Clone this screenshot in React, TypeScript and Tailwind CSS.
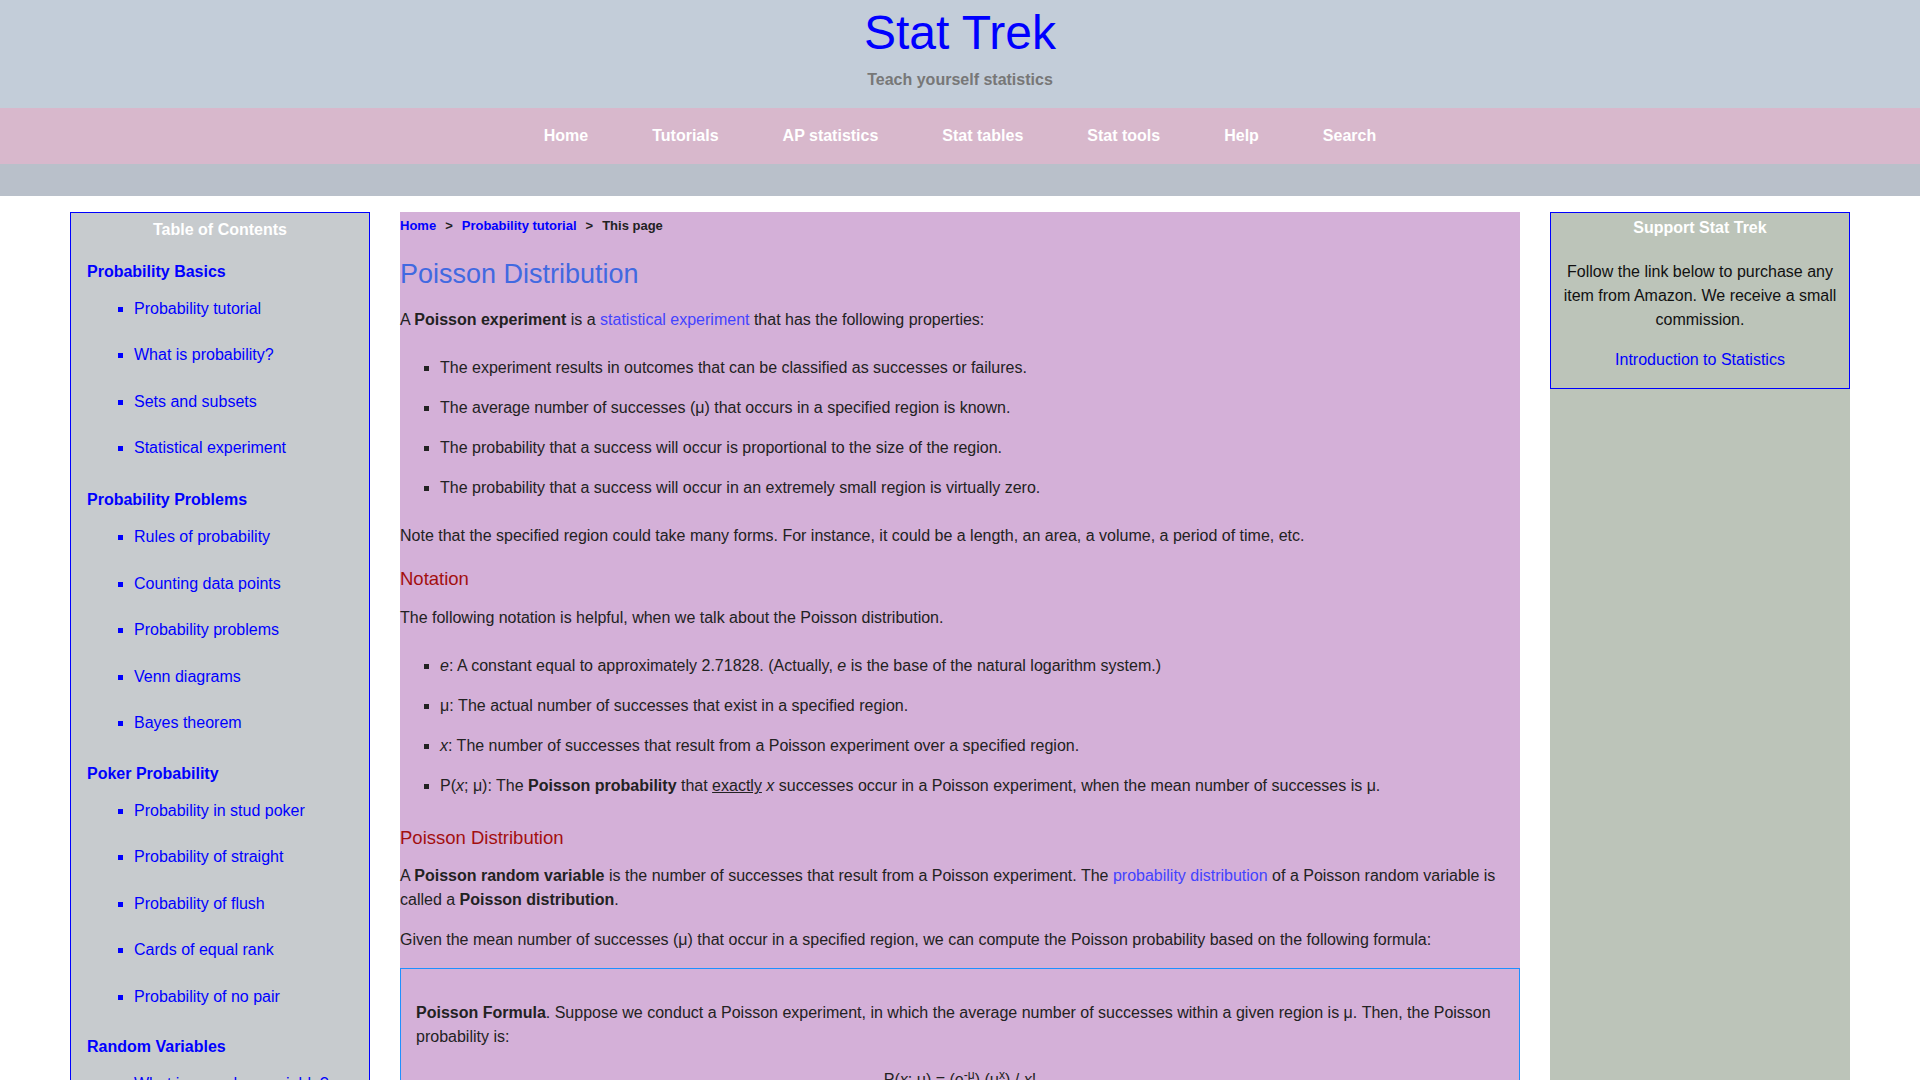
import React from "react";

const navItems = ["Home", "Tutorials", "AP statistics", "Stat tables", "Stat tools", "Help", "Search"];

const toc: { title: string; items: string[] }[] = [
  {
    title: "Probability Basics",
    items: ["Probability tutorial", "What is probability?", "Sets and subsets", "Statistical experiment"],
  },
  {
    title: "Probability Problems",
    items: ["Rules of probability", "Counting data points", "Probability problems", "Venn diagrams", "Bayes theorem"],
  },
  {
    title: "Poker Probability",
    items: [
      "Probability in stud poker",
      "Probability of straight",
      "Probability of flush",
      "Cards of equal rank",
      "Probability of no pair",
    ],
  },
  {
    title: "Random Variables",
    items: ["What is a random variable?", "Discrete vs. continuous", "Probability distributions", "Mean and variance"],
  },
];

export default function App() {
  return (
    <div className="min-h-screen bg-white font-['Liberation_Sans',Arial,sans-serif] text-[16px]">
      {/* Header */}
      <div className="h-[108px] bg-[#c3cdd9] text-center">
        <div className="pt-[5px] text-[48px] leading-[55px] text-[#0000ff]">Stat Trek</div>
        <div className="mt-[11px] text-[16px] font-bold leading-[18px] text-[#777777]">
          Teach yourself statistics
        </div>
      </div>
      {/* Nav */}
      <div className="flex h-[56px] items-center justify-center bg-[#d8b8cc]">
        {navItems.map((n) => (
          <span key={n} className="px-8 text-[16px] font-bold leading-[18px] text-white">
            {n}
          </span>
        ))}
      </div>
      <div className="h-[32px] bg-[#b9c0ca]" />

      {/* Body */}
      <div className="flex items-stretch gap-[30px] px-[70px] pt-[16px]">
        {/* Left TOC */}
        <div className="w-[300px] shrink-0 border border-[#0000ff] bg-[#c7cbce] pt-[8px] pb-[20px]">
          <div className="text-center font-bold leading-[18px] text-white">Table of Contents</div>
          {toc.map((sec, i) => (
            <div
              key={sec.title}
              className={i === 0 ? "mt-[24px]" : i === 1 ? "mt-[19.5px]" : "mt-[18px]"}
            >
              <div className="pl-[16px] font-bold leading-[18px] text-[#0000ff]">{sec.title}</div>
              <ul
                className={
                  i === 0
                    ? "mt-[4.5px] list-[square] pl-[63px] text-[#0000ff]"
                    : "mt-[5px] list-[square] pl-[63px] text-[#0000ff]"
                }
              >
                {sec.items.map((it) => (
                  <li key={it} className="leading-[46.5px]">
                    {it}
                  </li>
                ))}
              </ul>
            </div>
          ))}
        </div>

        {/* Main */}
        <div className="min-w-0 flex-1 bg-[#d4b0d8] pb-[40px] text-[#222222]">
          <div className="pt-[6px] text-[13px] font-bold leading-[16px]">
            <span className="text-[#0000ff]">Home</span>
            <span className="mx-[9px]">&gt;</span>
            <span className="text-[#0000ff]">Probability tutorial</span>
            <span className="mx-[9px]">&gt;</span>
            <span>This page</span>
          </div>
          <h1 className="mt-[24px] text-[27px] font-normal leading-[32px] text-[#4169e1]">Poisson Distribution</h1>
          <p className="mt-[18px] leading-[24.5px]">
            A <b>Poisson experiment</b> is a <span className="text-[#4343ff]">statistical experiment</span> that has
            the following properties:
          </p>
          <ul className="mt-[23px] list-[square] space-y-[15.5px] pl-[40px]">
            <li className="leading-[24.5px]">
              The experiment results in outcomes that can be classified as successes or failures.
            </li>
            <li className="leading-[24.5px]">
              The average number of successes (μ) that occurs in a specified region is known.
            </li>
            <li className="leading-[24.5px]">
              The probability that a success will occur is proportional to the size of the region.
            </li>
            <li className="leading-[24.5px]">
              The probability that a success will occur in an extremely small region is virtually zero.
            </li>
          </ul>
          <p className="mt-[24.4px] leading-[24.5px]">
            Note that the specified region could take many forms. For instance, it could be a length, an area, a
            volume, a period of time, etc.
          </p>
          <h3 className="mt-[18.5px] text-[18.5px] font-normal leading-[24px] text-[#a30f0f]">Notation</h3>
          <p className="mt-[15px] leading-[24.5px]">
            The following notation is helpful, when we talk about the Poisson distribution.
          </p>
          <ul className="mt-[23.5px] list-[square] space-y-[15.5px] pl-[40px]">
            <li className="leading-[24.5px]">
              <i>e</i>: A constant equal to approximately 2.71828. (Actually, <i>e</i> is the base of the natural
              logarithm system.)
            </li>
            <li className="leading-[24.5px]">μ: The actual number of successes that exist in a specified region.</li>
            <li className="leading-[24.5px]">
              <i>x</i>: The number of successes that result from a Poisson experiment over a specified region.
            </li>
            <li className="leading-[24.5px]">
              P(<i>x</i>; μ): The <b>Poisson probability</b> that <u>exactly</u> <i>x</i> successes occur in a
              Poisson experiment, when the mean number of successes is μ.
            </li>
          </ul>
          <h3 className="mt-[27px] text-[18.5px] font-normal leading-[24px] text-[#a30f0f]">
            Poisson Distribution
          </h3>
          <p className="mt-[14px] leading-[24.5px]">
            A <b>Poisson random variable</b> is the number of successes that result from a Poisson experiment. The{" "}
            <span className="text-[#4343ff]">probability distribution</span> of a Poisson random variable is called
            a <b>Poisson distribution</b>.
          </p>
          <p className="mt-[15.5px] leading-[24.5px]">
            Given the mean number of successes (μ) that occur in a specified region, we can compute the Poisson
            probability based on the following formula:
          </p>
          <div className="mt-[15px] border border-[#1e90ff] px-[15px] pt-[32px] pb-[30px]">
            <p className="leading-[24.5px]">
              <b>Poisson Formula</b>. Suppose we conduct a Poisson experiment, in which the average number of
              successes within a given region is μ. Then, the Poisson probability is:
            </p>
            <p className="mt-[18px] text-center leading-[24.5px]">
              P(<i>x</i>; μ) = (e<sup>-μ</sup>) (μ<sup>x</sup>) / <i>x</i>!
            </p>
            <p className="mt-[16px] leading-[24.5px]">
              where <i>x</i> is the actual number of successes that result from the experiment, and e is
              approximately equal to 2.71828.
            </p>
          </div>
        </div>

        {/* Right */}
        <div className="w-[300px] shrink-0 bg-[#bcc4b9]">
          <div className="border border-[#0000ff] px-[10px] pt-[6px] pb-[16px] text-center">
            <div className="font-bold leading-[18px] text-white">Support Stat Trek</div>
            <p className="mt-[23px] leading-[24px] text-[#111111]">
              Follow the link below to purchase any item from Amazon. We receive a small commission.
            </p>
            <div className="mt-[16px] leading-[24px] text-[#0000ff]">Introduction to Statistics</div>
          </div>
        </div>
      </div>
    </div>
  );
}
